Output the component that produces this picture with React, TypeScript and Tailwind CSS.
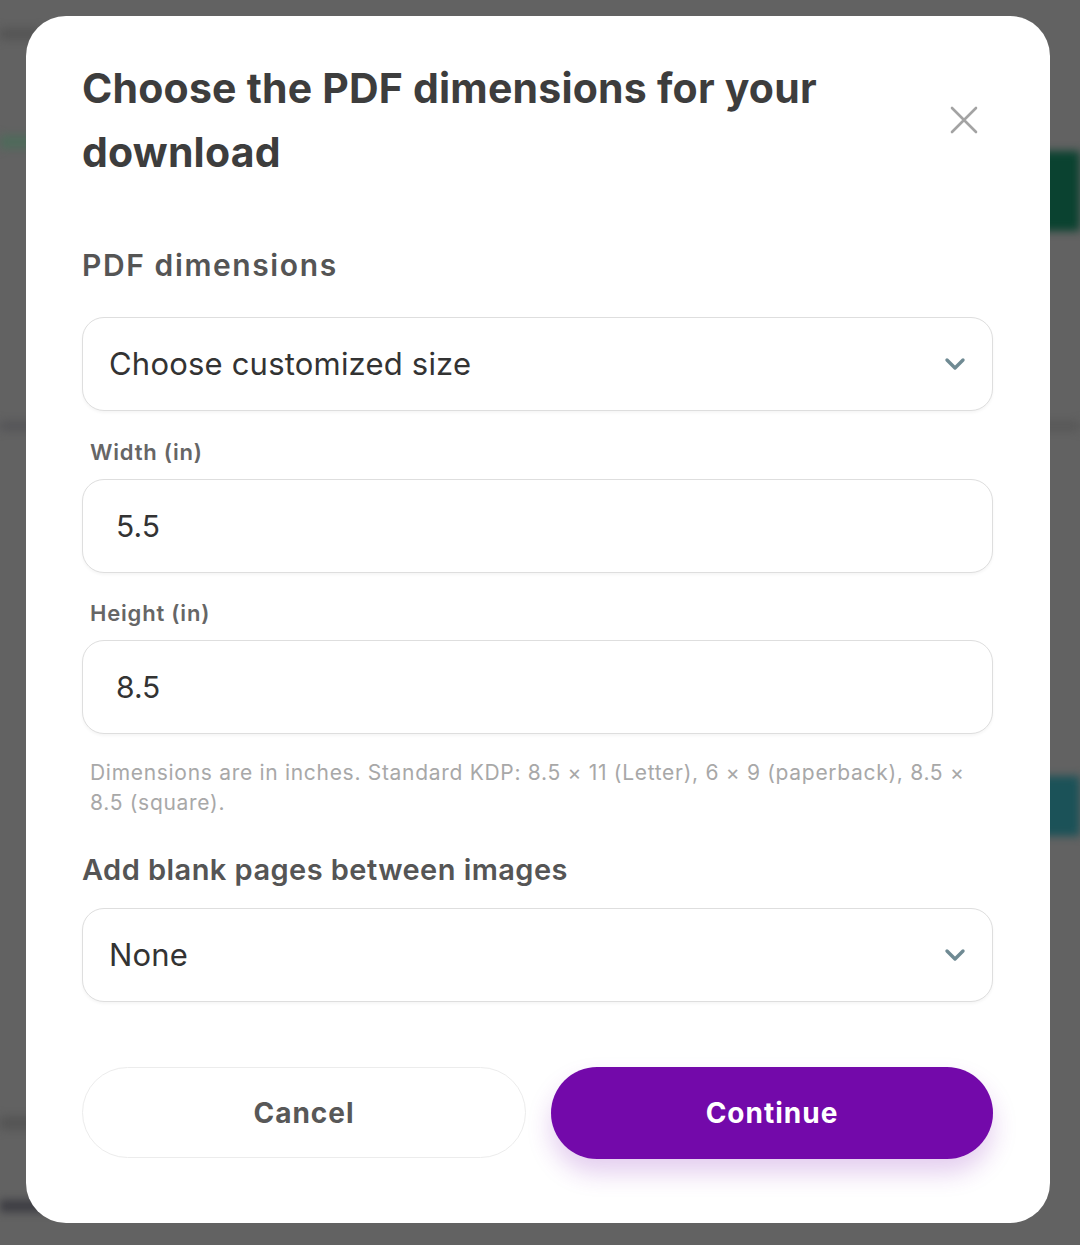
import React from "react";

const font = { fontFamily: "Inter, 'Noto Sans', sans-serif" };

function Chevron() {
  return (
    <svg width="22" height="14" viewBox="0 0 22 14">
      <polyline points="3,3 11,11 19,3" fill="none" stroke="#6f8a93" strokeWidth="3.4" strokeLinecap="round" strokeLinejoin="round" />
    </svg>
  );
}

function SelectBox({ value }: { value: string }) {
  return (
    <div className="flex h-[94px] w-full items-center justify-between rounded-[22px] border-[1.5px] border-[#dedede] bg-white pl-[26px] pr-[26px] shadow-[0_2px_3px_rgba(0,0,0,0.04)]">
      <span className="text-[31px] tracking-[0.2px] text-[#333333]">{value}</span>
      <Chevron />
    </div>
  );
}

function InputBox({ value }: { value: string }) {
  return (
    <div className="flex h-[94px] w-full items-center rounded-[22px] border-[1.5px] border-[#dedede] bg-white pl-[33px] shadow-[0_2px_3px_rgba(0,0,0,0.04)]">
      <span className="text-[30px] text-[#333333]">{value}</span>
    </div>
  );
}

export default function App() {
  return (
    <div className="relative h-[1245px] w-[1080px] overflow-hidden bg-[#626262]" style={font}>
      {/* blurred background page */}
      <div className="flex h-full flex-col blur-[4px]">
        <div className="mt-[28px] h-[12px] w-[40px] bg-[#555555]" />
        <div className="mt-[95px] h-[14px] w-[40px] bg-[#4f6a5b]" />
        <div className="flex justify-end">
          <div className="mt-[2px] h-[80px] w-[60px] rounded-l-[20px] bg-[#0a4230]" />
        </div>
        <div className="mt-[190px] flex justify-between">
          <div className="h-[10px] w-[40px] bg-[#555558]" />
          <div className="h-[10px] w-[40px] bg-[#585858]" />
        </div>
        <div className="mt-[345px] flex justify-end">
          <div className="h-[60px] w-[50px] bg-[#1b5258]" />
        </div>
        <div className="mt-[280px] h-[14px] w-[40px] bg-[#555555]" />
        <div className="mt-[70px] h-[12px] w-[160px] bg-[#3c3c42]" />
      </div>

      {/* modal */}
      <div className="absolute left-[26px] top-[16px] flex h-[1207px] w-[1024px] flex-col rounded-[40px] bg-white pl-[56px] pr-[57px]">
        <div className="mt-[40px] flex items-center justify-between">
          <h1 className="w-[790px] text-[41px] font-bold leading-[64px] tracking-[0.2px] text-[#3d3d3d]">
            Choose the PDF dimensions for your download
          </h1>
          <svg width="28" height="28" viewBox="0 0 28 28" className="mr-[15px]">
            <path d="M2 2 L26 26 M26 2 L2 26" stroke="#a3a3a3" strokeWidth="2.6" strokeLinecap="round" />
          </svg>
        </div>

        <div className="mt-[59px] text-[30px] font-semibold leading-[45px] tracking-[1.6px] text-[#555555]">PDF dimensions</div>
        <div className="mt-[29px]">
          <SelectBox value="Choose customized size" />
        </div>

        <label className="mt-[25px] pl-[8px] text-[22px] font-semibold leading-[33px] tracking-[0.8px] text-[#666666]">Width (in)</label>
        <div className="mt-[10px]">
          <InputBox value="5.5" />
        </div>

        <label className="mt-[24px] pl-[8px] text-[22px] font-semibold leading-[33px] tracking-[0.8px] text-[#666666]">Height (in)</label>
        <div className="mt-[10px]">
          <InputBox value="8.5" />
        </div>

        <p className="mt-[24px] pl-[8px] text-[21px] leading-[30px] tracking-[0.7px] text-[#a8a8a8]">
          Dimensions are in inches. Standard KDP: 8.5 × 11 (Letter), 6 × 9 (paperback), 8.5 × 8.5 (square).
        </p>

        <div className="mt-[29px] text-[29px] font-semibold leading-[45px] tracking-[0.45px] text-[#555555]">Add blank pages between images</div>
        <div className="mt-[16px]">
          <SelectBox value="None" />
        </div>

        <div className="mt-[65px] flex gap-[25px]">
          <button className="h-[91px] flex-1 rounded-full border-[1.5px] border-[#ececec] bg-white text-[28px] font-bold tracking-[1px] text-[#585858]">
            Cancel
          </button>
          <button className="h-[92px] flex-1 rounded-full bg-[#7309aa] text-[28px] font-bold tracking-[1px] text-white shadow-[0_14px_24px_rgba(130,30,180,0.22)]">
            Continue
          </button>
        </div>
      </div>
    </div>
  );
}
